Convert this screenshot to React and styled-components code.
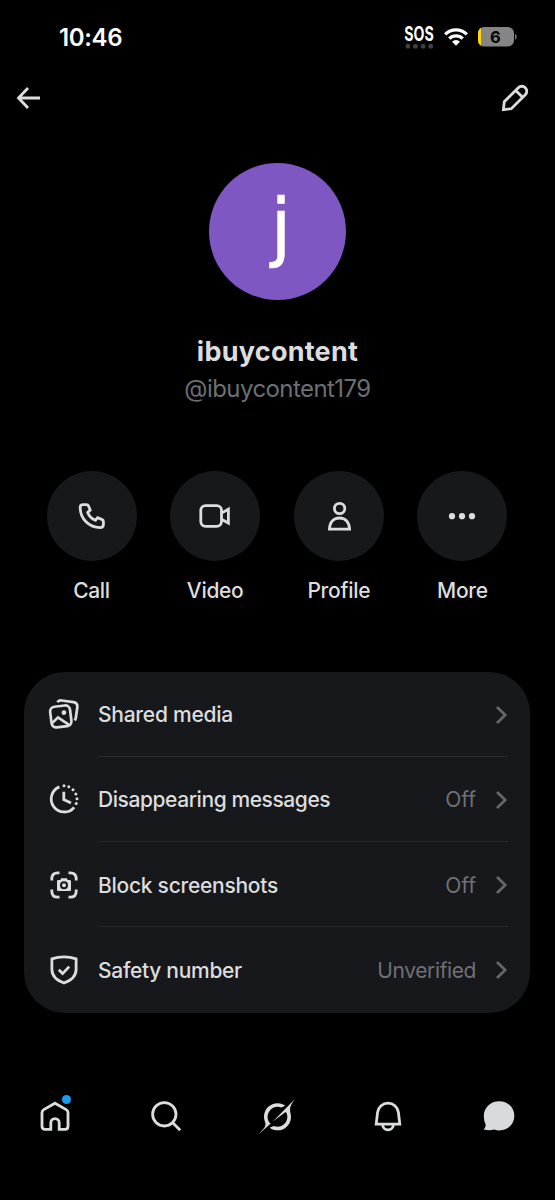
import React from 'react';
import styled, { createGlobalStyle } from 'styled-components';

const GlobalStyle = createGlobalStyle`
  * {
    box-sizing: border-box;
  }
  body {
    margin: 0;
    background: #000;
    font-family: Inter, 'Liberation Sans', sans-serif;
    color: #dcddde;
  }
  svg {
    display: block;
    flex: none;
    overflow: visible;
  }
`;

const Screen = styled.div`
  width: 555px;
  height: 1200px;
  display: flex;
  flex-direction: column;
  background: #000;
  overflow: hidden;
  white-space: nowrap;
`;

const StatusBar = styled.header`
  height: 74px;
  padding: 0 38px 0 59px;
  display: flex;
  align-items: center;
  justify-content: space-between;
  color: #fff;
`;

const Time = styled.div`
  font-size: 24px;
  font-weight: 600;
  letter-spacing: -0.35px;
`;

const StatusIcons = styled.div`
  display: flex;
  align-items: center;
  gap: 10px;
`;

const TopBar = styled.div`
  height: 48px;
  padding: 0 26px 0 16px;
  display: flex;
  align-items: center;
  justify-content: space-between;
`;

const Hero = styled.section`
  padding-top: 41px;
  display: flex;
  flex-direction: column;
  align-items: center;
`;

const Avatar = styled.div`
  width: 137px;
  height: 137px;
  padding-left: 7px;
  border-radius: 50%;
  background: #7e57c2;
  color: #fff;
  display: flex;
  justify-content: center;
  font-family: 'DejaVu Sans', sans-serif;
  font-size: 74px;
  line-height: 127px;
  -webkit-text-stroke: 0.5px #fff;
`;

const Name = styled.h1`
  margin: 34px 0 0;
  font-size: 27px;
  line-height: 36px;
  font-weight: 700;
  letter-spacing: 0.25px;
`;

const Handle = styled.div`
  margin-top: 2px;
  font-size: 24px;
  line-height: 34px;
  color: #6c6f73;
  letter-spacing: -0.57px;
`;

const Actions = styled.div`
  margin-top: 65px;
  padding: 0 47.5px 0 46.5px;
  display: flex;
  justify-content: space-between;
`;

const Action = styled.div`
  width: 90px;
  display: flex;
  flex-direction: column;
  align-items: center;
`;

const ActionCircle = styled.div`
  width: 90px;
  height: 90px;
  border-radius: 50%;
  background: #17181b;
  display: flex;
  align-items: center;
  justify-content: center;
`;

const ActionLabel = styled.div`
  margin-top: 16px;
  font-size: 21px;
  line-height: 28px;
  font-weight: 500;
  letter-spacing: -0.3px;
`;

const Card = styled.section`
  margin: 66.5px 25px 0 24.4px;
  height: 341px;
  padding-left: 23.6px;
  border-radius: 41px;
  background: #17181b;
  display: grid;
  grid-template-rows: repeat(4, 1fr);
`;

const Row = styled.div`
  display: flex;
  align-items: center;
  gap: 18px;
`;

const RowBody = styled.div`
  flex: 1;
  height: 100%;
  padding-top: 2px;
  margin-right: 22px;
  display: flex;
  align-items: center;
  border-bottom: 1px solid ${(p) => (p.$last ? 'transparent' : '#292a2e')};
`;

const RowTitle = styled.div`
  flex: 1;
  font-size: 21px;
  font-weight: 500;
  letter-spacing: ${(p) => p.$spacing || 0}px;
`;

const RowValue = styled.div`
  margin-right: 20px;
  font-size: 21px;
  color: #6f7175;
  letter-spacing: ${(p) => p.$spacing || 0}px;
`;

const TabBar = styled.nav`
  margin-top: 67.5px;
  height: 72px;
  padding-right: 1px;
  display: grid;
  grid-template-columns: repeat(5, 1fr);
  align-items: center;
  justify-items: center;
`;

const Tab = styled.div`
  position: relative;
`;

const Badge = styled.span`
  position: absolute;
  top: -5px;
  right: 0;
  width: 9px;
  height: 9px;
  border-radius: 50%;
  background: #1d9bf0;
`;

const Icon = ({ w, h, sw = 2.8, children }) => (
  <svg
    width={w}
    height={h}
    viewBox={`0 0 ${w} ${h}`}
    fill="none"
    stroke="#dcddde"
    strokeWidth={sw}
  >
    {children}
  </svg>
);

const SosIcon = () => (
  <svg width="30" height="24" viewBox="0 0 30 24" fill="#fff">
    <text x="0.3" y="16" fontSize="19.5" fontWeight="700" textLength="29.5" lengthAdjust="spacingAndGlyphs">
      SOS
    </text>
    {[1.6, 9.1, 16.8, 24.5].map((x) => (
      <rect key={x} x={x} y="19" width="4.6" height="4.6" rx="1.6" fill="#404040" />
    ))}
  </svg>
);

const WifiIcon = () => (
  <svg width="24" height="18" viewBox="0 0 24 18" fill="none" stroke="#fff" strokeWidth="3.3">
    <path d="M1.2 6.3a15.3 15.3 0 0 1 21.6 0" />
    <path d="M5.3 10.6a9.4 9.4 0 0 1 13.4 0" />
    <path d="M12 17.8L8 13.7a5.8 5.8 0 0 1 8 0z" fill="#fff" stroke="none" />
  </svg>
);

const BatteryIcon = () => (
  <svg width="39" height="20" viewBox="0 0 39 20">
    <clipPath id="battery">
      <rect width="36" height="19.5" rx="6.3" />
    </clipPath>
    <g clipPath="url(#battery)">
      <rect width="36" height="20" fill="#858585" />
      <rect width="3" height="20" fill="#ffd60a" />
    </g>
    <path d="M37.1 6.8c2 1 2 5 0 6z" fill="#858585" />
    <text x="17.4" y="15.8" fontSize="16.5" fontWeight="700" textAnchor="middle" fill="#000">
      6
    </text>
  </svg>
);

const BackIcon = () => (
  <Icon w={25} h={24}>
    <path d="M24 12H3M12 2L2.5 12L12 22" />
  </Icon>
);

const PencilIcon = () => (
  <Icon w={28} h={28}>
    <path d="M2.4 25.6L3.3 17.7L17.3 3.7A4.9 4.9 0 0 1 24.3 10.7L10.3 24.7zM14.7 6.4L21.6 13.3" />
  </Icon>
);

const CallIcon = () => (
  <Icon w={28} h={28}>
    <path d="M5 2.6H8.6Q9.9 2.6 10.4 3.8L12.2 8.1L9.7 10.4C11 13.9 13.9 16.8 17.5 18.3L19.6 15.7L24.2 17.6Q25.4 18.1 25.4 19.4V22.6Q25.4 25.6 22.2 25.6C11 25.6 2.2 16.8 2.2 5.4Q2.2 2.6 5 2.6z" />
  </Icon>
);

const VideoIcon = () => (
  <Icon w={32} h={24}>
    <rect x="1.8" y="1.6" width="20.7" height="20.8" rx="4.8" />
    <path d="M22.5 9.1L29.4 5.2V19.1L22.5 15.3" />
  </Icon>
);

const ProfileIcon = () => (
  <Icon w={24} h={30}>
    <circle cx="12.6" cy="7.5" r="5.2" />
    <path d="M2.4 28.2C2.7 21.4 6.5 17 12.5 17S22.2 21.4 22.6 28.2z" />
  </Icon>
);

const MoreIcon = () => (
  <Icon w={28} h={8} sw={0}>
    <g fill="#dcddde">
      <circle cx="4" cy="4.2" r="3.1" />
      <circle cx="14" cy="4.2" r="3.1" />
      <circle cx="24" cy="4.2" r="3.1" />
    </g>
  </Icon>
);

const MediaIcon = () => (
  <Icon w={32} h={32} sw={2.7}>
    <g transform="rotate(-7 13 18.5)">
      <rect x="2.8" y="8" width="20" height="20.8" rx="4.8" />
      <path d="M3.4 24L9.9 19L20 27.8" />
      <circle cx="16.4" cy="15" r="2.4" fill="#dcddde" stroke="none" />
    </g>
    <path d="M9.3 4.2Q11 2.2 13.5 2.5L25.5 4.1Q29.9 4.9 29.3 9.2L28 19Q27.8 21 26.8 22.5" />
  </Icon>
);

const TimerIcon = () => (
  <Icon w={32} h={32}>
    <path d="M11.4 3.9A13 13 0 1 0 26.2 24.3M15.8 8.7V16.5L23 20" />
    <g fill="#dcddde" stroke="none">
      <circle cx="16" cy="2.7" r="1.5" />
      <circle cx="20.8" cy="3.7" r="1.5" />
      <circle cx="25" cy="6.7" r="1.5" />
      <circle cx="27.9" cy="10.9" r="1.5" />
      <circle cx="29" cy="15.8" r="1.5" />
      <circle cx="28.2" cy="20.5" r="1.5" />
    </g>
  </Icon>
);

const CaptureIcon = () => (
  <Icon w={32} h={32}>
    <path d="M3.8 11.5V9.8Q3.8 3.8 9.8 3.8H11.5M20.5 3.8H22.2Q28.2 3.8 28.2 9.8V11.5M28.2 20.5V22.2Q28.2 28.2 22.2 28.2H20.5M11.5 28.2H9.8Q3.8 28.2 3.8 22.2V20.5" />
    <path
      d="M9 12Q9 11 10.2 11H12.2L13.2 9.2H18.8L19.8 11H21.8Q23 11 23 12.2V20.7Q23 22 21.8 22H10.2Q9 22 9 20.8z"
      fill="#dcddde"
      stroke="none"
    />
    <circle cx="16" cy="16.2" r="3" stroke="#17181b" strokeWidth="2" />
  </Icon>
);

const ShieldIcon = () => (
  <Icon w={32} h={32}>
    <path d="M16 2.8C20 2.8 24.3 3.5 28.1 4.9V15.6C28.1 22.1 23 26.6 16 29C9 26.6 3.9 22.1 3.9 15.6V4.9C7.7 3.5 12 2.8 16 2.8z" />
    <path d="M10.8 15.8L14.6 19.6L21.2 12.6" />
  </Icon>
);

const Chevron = () => (
  <svg width="12" height="18" viewBox="0 0 12 18" fill="none" stroke="#65676a" strokeWidth="2.7">
    <path d="M1 1L9.2 9L1 17" />
  </svg>
);

const HomeIcon = () => (
  <Icon w={32} h={32}>
    <path d="M16 3.2L27.2 9.6Q29 10.7 29 12.6V26.2Q29 29.3 26 29.3H20.2V22.8A4.2 4.2 0 0 0 11.8 22.8V29.3H6Q3 29.3 3 26.2V12.6Q3 10.7 4.8 9.6z" />
  </Icon>
);

const SearchIcon = () => (
  <Icon w={32} h={32}>
    <circle cx="14.3" cy="14.3" r="11.7" />
    <path d="M22.5 22.5L30.2 30.2" />
  </Icon>
);

const GrokIcon = () => (
  <svg width="36" height="35" viewBox="0 0 33 32" fill="#dcddde">
    <path d="M12.745 20.54l10.97-8.19c.539-.4 1.307-.244 1.564.38 1.349 3.288.746 7.241-1.938 9.955-2.683 2.714-6.417 3.31-9.83 1.954l-3.728 1.745c5.347 3.697 11.84 2.782 15.898-1.324 3.219-3.255 4.216-7.692 3.284-11.693l.008.009c-1.351-5.878.332-8.227 3.782-13.031L33 0l-4.54 4.59v-.014L12.743 20.544m-2.263 1.987c-3.837-3.707-3.175-9.446.1-12.755 2.42-2.449 6.388-3.448 9.852-1.979l3.72-1.737c-.67-.49-1.53-1.017-2.515-1.387-4.455-1.854-9.789-.931-13.41 2.728-3.483 3.523-4.579 8.94-2.697 13.561 1.405 3.454-.899 5.898-3.22 8.364C1.49 30.2.666 31.074 0 32l10.478-9.466" />
  </svg>
);

const BellIcon = () => (
  <Icon w={32} h={32}>
    <path d="M4.2 24.2L5.6 12.2A10.5 10.5 0 0 1 26.4 12.2L27.8 24.2zM10.6 24.5A5.4 5.4 0 0 0 21.4 24.5" />
  </Icon>
);

const ChatIcon = () => (
  <svg width="32" height="32" viewBox="0 0 32 32" fill="#d9dadb">
    <path d="M16.2 1.3C25 1.3 31.3 7.6 31.3 15.8S25 30.4 16.4 30.4Q13.5 30.4 11.2 29.4Q6.5 31 .8 29.4Q2.8 27.3 2.7 24.8Q.8 20.8 .8 16.1C.8 7.6 7.5 1.3 16.2 1.3z" />
  </svg>
);

const actions = [
  { label: 'Call', icon: <CallIcon /> },
  { label: 'Video', icon: <VideoIcon /> },
  { label: 'Profile', icon: <ProfileIcon /> },
  { label: 'More', icon: <MoreIcon /> },
];

const rows = [
  { title: 'Shared media', icon: <MediaIcon />, spacing: -0.25 },
  { title: 'Disappearing messages', value: 'Off', icon: <TimerIcon />, spacing: -0.43 },
  { title: 'Block screenshots', value: 'Off', icon: <CaptureIcon />, spacing: -0.27 },
  { title: 'Safety number', value: 'Unverified', icon: <ShieldIcon />, spacing: -0.3, valueSpacing: -0.4 },
];

const App = () => (
  <Screen>
    <GlobalStyle />
    <StatusBar>
      <Time>10:46</Time>
      <StatusIcons>
        <SosIcon />
        <WifiIcon />
        <BatteryIcon />
      </StatusIcons>
    </StatusBar>

    <TopBar>
      <BackIcon />
      <PencilIcon />
    </TopBar>

    <Hero>
      <Avatar>j</Avatar>
      <Name>ibuycontent</Name>
      <Handle>@ibuycontent179</Handle>
    </Hero>

    <Actions>
      {actions.map(({ label, icon }) => (
        <Action key={label}>
          <ActionCircle>{icon}</ActionCircle>
          <ActionLabel>{label}</ActionLabel>
        </Action>
      ))}
    </Actions>

    <Card>
      {rows.map(({ title, value, icon, spacing, valueSpacing }, i) => (
        <Row key={title}>
          {icon}
          <RowBody $last={i === rows.length - 1}>
            <RowTitle $spacing={spacing}>{title}</RowTitle>
            {value && <RowValue $spacing={valueSpacing}>{value}</RowValue>}
            <Chevron />
          </RowBody>
        </Row>
      ))}
    </Card>

    <TabBar>
      <Tab>
        <HomeIcon />
        <Badge />
      </Tab>
      <Tab><SearchIcon /></Tab>
      <Tab><GrokIcon /></Tab>
      <Tab><BellIcon /></Tab>
      <Tab><ChatIcon /></Tab>
    </TabBar>
  </Screen>
);

export default App;
